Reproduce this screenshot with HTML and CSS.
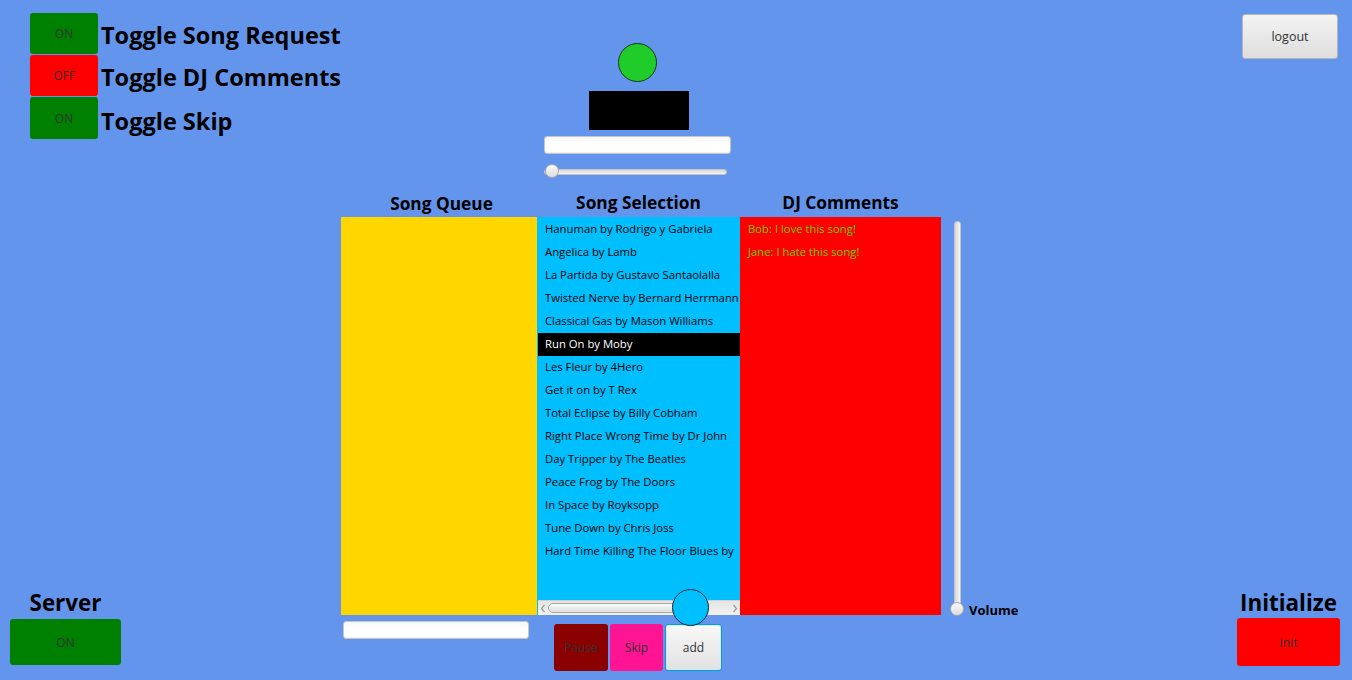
FILE: index.html
```html
<!DOCTYPE html>
<html lang="en">
<head>
<meta charset="utf-8">
<title>DJ Console</title>
<link rel="stylesheet" href="styles.css">
</head>
<body>
<div class="app">
  <aside class="left">
    <div class="toggles">
      <div class="toggle-row"><button class="tbtn on">ON</button><span class="tlabel">Toggle Song Request</span></div>
      <div class="toggle-row"><button class="tbtn off">OFF</button><span class="tlabel">Toggle DJ Comments</span></div>
      <div class="toggle-row"><button class="tbtn on">ON</button><span class="tlabel">Toggle Skip</span></div>
    </div>
    <div class="server">
      <div class="blabel">Server</div>
      <button class="sbtn on">ON</button>
    </div>
  </aside>

  <main class="center">
    <div class="top-controls">
      <div class="led"></div>
      <div class="display"></div>
      <div class="textfield tf-top"></div>
      <div class="hslider">
        <div class="track"></div>
        <div class="thumb hthumb"></div>
      </div>
    </div>

    <div class="lists-area">
      <div class="lists">
        <section class="col">
          <h2 class="colhead head-queue">Song Queue</h2>
          <div class="panel queue"></div>
        </section>
        <section class="col">
          <h2 class="colhead">Song Selection</h2>
          <div class="panel selection">
            <ul class="items">
              <li>Hanuman by Rodrigo y Gabriela</li>
              <li>Angelica by Lamb</li>
              <li>La Partida by Gustavo Santaolalla</li>
              <li>Twisted Nerve by Bernard Herrmann</li>
              <li>Classical Gas by Mason Williams</li>
              <li class="selected">Run On by Moby</li>
              <li>Les Fleur by 4Hero</li>
              <li>Get it on by T Rex</li>
              <li>Total Eclipse by Billy Cobham</li>
              <li>Right Place Wrong Time by Dr John</li>
              <li>Day Tripper by The Beatles</li>
              <li>Peace Frog by The Doors</li>
              <li>In Space by Royksopp</li>
              <li>Tune Down by Chris Joss</li>
              <li>Hard Time Killing The Floor Blues by</li>
            </ul>
            <div class="hscroll">
              <svg class="arrow" width="6" height="9" viewBox="0 0 6 9"><path d="M4.5 1 L1.5 4.5 L4.5 8" fill="none" stroke="#9a9a9a" stroke-width="1.2"/></svg>
              <div class="sb-track"><div class="sb-thumb"></div></div>
              <svg class="arrow" width="6" height="9" viewBox="0 0 6 9"><path d="M1.5 1 L4.5 4.5 L1.5 8" fill="none" stroke="#9a9a9a" stroke-width="1.2"/></svg>
            </div>
          </div>
        </section>
        <section class="col">
          <h2 class="colhead">DJ Comments</h2>
          <div class="panel comments">
            <ul class="items">
              <li>Bob: I love this song!</li>
              <li>Jane: I hate this song!</li>
            </ul>
          </div>
        </section>
      </div>
      <div class="volume">
        <div class="vslider">
          <div class="vtrack"></div>
          <div class="thumb vthumb"></div>
        </div>
        <span class="vlabel">Volume</span>
      </div>
    </div>

    <div class="bottom-row">
      <div class="textfield tf-queue"></div>
      <div class="actions">
        <button class="abtn pause">Pause</button>
        <button class="abtn skip">Skip</button>
        <button class="abtn add">add</button>
      </div>
    </div>
  </main>

  <aside class="right">
    <button class="logout">logout</button>
    <div class="init">
      <div class="blabel">Initialize</div>
      <button class="ibtn">init</button>
    </div>
  </aside>

  <div class="blue-dot"></div>
</div>
</body>
</html>
```

FILE: styles.css
```css
* { box-sizing: border-box; }
html, body { margin: 0; padding: 0; }
body {
  background: #6495ED;
  width: 1352px;
  height: 680px;
  overflow: hidden;
  font-family: "Open Sans", "Noto Sans", sans-serif;
  color: #000;
}
button { font-family: "Open Sans", "Noto Sans", sans-serif; cursor: default; }

.app {
  position: relative;
  display: grid;
  grid-template-columns: 341px 896px 115px;
  height: 680px;
}

/* left column */
.left {
  display: flex;
  flex-direction: column;
  justify-content: space-between;
  padding: 13px 0 15px 0;
  min-width: 0;
}
.toggles { display: flex; flex-direction: column; gap: 1px; padding-left: 30px; }
.toggle-row { display: flex; align-items: center; gap: 3px; white-space: nowrap; }
.tbtn {
  flex: none;
  width: 68px; height: 41px; border: none; border-radius: 3px;
  font-size: 12px; color: #333; padding: 0;
}
.on { background: #008000; }
.off { background: #FF0000; }
.tlabel { font-weight: 700; font-size: 23.5px; white-space: nowrap; padding-top: 3px; }
.toggle-row:last-child .tbtn { height: 42px; }
.toggle-row:last-child .tlabel { padding-top: 5px; }

.blabel { font-weight: 700; font-size: 22.4px; line-height: 28px; white-space: nowrap; }
.server {
  display: flex; flex-direction: column; align-items: center;
  width: 111px; margin-left: 10px; gap: 2px;
}
.sbtn { width: 111px; height: 46px; border: none; border-radius: 3px; font-size: 12px; color: #333; }

/* center */
.center { display: flex; flex-direction: column; }
.top-controls {
  margin-left: 203px; width: 187px; padding-top: 43px;
  display: flex; flex-direction: column;
}
.led {
  width: 39px; height: 39px; border-radius: 50%;
  background: #20CC2A; border: 1px solid #143a14; align-self: center;
}
.display { width: 100px; height: 39px; background: #000; margin-top: 9px; margin-left: 45px; }
.textfield {
  height: 18px; border: 1px solid #c6c6c6; border-radius: 3px;
  background: linear-gradient(#f6f6f6, #ffffff 40%, #ffffff);
  box-shadow: inset 0 -1px 1px rgba(0,0,0,0.06);
}
.tf-top { margin-top: 6px; }
.hslider { position: relative; margin-top: 11px; width: 183px; height: 13px; display: flex; align-items: center; }
.track {
  flex: 1; height: 6px; border-radius: 3px;
  background: linear-gradient(#d9d9d9, #f4f4f4);
  border: 1px solid #c4c4c4;
}
.thumb {
  position: absolute; width: 14px; height: 14px; border-radius: 50%;
  background: linear-gradient(#fbfbfb, #dcdcdc);
  border: 1px solid #a9a9a9;
}
.hthumb { left: 1px; top: -1px; }

.lists-area { display: flex; }
.lists { display: grid; grid-template-columns: 196px 203px 201px; }
.colhead {
  height: 39px; margin: 0; padding-bottom: 3px;
  display: flex; align-items: flex-end; justify-content: center;
  font-size: 17.3px; font-weight: 700; line-height: 22px;
}
.head-queue { padding-left: 5px; padding-bottom: 2px; }
.panel { height: 398px; }
.queue { background: #FFD700; }
.selection { background: #00BFFF; display: flex; flex-direction: column; padding: 1px 0 0 1px; }
.comments { background: #FF0000; padding: 1px 0 0 1px; }
.items { list-style: none; margin: 0; padding: 0; flex: 1; overflow: hidden; }
.items li {
  height: 23px; line-height: 22px; padding: 0 0 1px 7px;
  font-size: 11.3px; white-space: nowrap; overflow: hidden;
}
.selection .items li { color: #000; }
.selection .items li.selected { background: #000; color: #fff; }
.comments .items li { color: #5ccc00; }

.hscroll {
  height: 15px; display: flex; align-items: center; gap: 2px; padding: 0 2px 0 2px;
  background: linear-gradient(#e4e4e4, #f2f2f2);
  border-top: 1px solid #d0d0d0;
}
.arrow { flex: none; }
.sb-track { flex: 1; height: 11px; display: flex; align-items: center; }
.sb-thumb {
  width: 141px; height: 10px; border-radius: 5px;
  background: linear-gradient(#fafafa, #dedede);
  border: 1px solid #a8a8a8;
}

.volume { display: flex; align-items: flex-end; margin-left: 12px; }
.vslider { position: relative; width: 8px; padding-top: 43px; height: 437px; display: flex; justify-content: center; }
.vtrack {
  width: 7px; height: 392px; border-radius: 3px;
  background: linear-gradient(90deg, #d7d7d7, #f6f6f6);
  border: 1px solid #c4c4c4;
}
.vthumb { left: -3px; bottom: -1px; }
.vlabel { font-weight: 700; font-size: 13px; margin-left: 8px; margin-bottom: -4px; line-height: 18px; }

.bottom-row { display: flex; align-items: flex-start; }
.tf-queue { width: 186px; margin-left: 2px; margin-top: 6px; }
.actions { display: flex; gap: 2px; margin-left: 25px; margin-top: 9px; }
.abtn {
  height: 47px; border: none; border-radius: 3px; font-size: 12px; color: #333; padding: 0;
}
.pause { width: 54px; background: #8B0000; }
.skip { width: 53px; background: #FF1493; }
.add {
  width: 57px; background: linear-gradient(#f8f8f8, #e2e2e2);
  border: 1px solid #039ED3; box-shadow: inset 0 0 0 1px #cfeefa;
}

/* right */
.right {
  display: flex; flex-direction: column; justify-content: space-between;
  padding: 14px 0 14px 0;
}
.logout {
  width: 96px; height: 45px; margin-left: 5px;
  border: 1px solid #b6b6b6; border-radius: 3px;
  background: linear-gradient(#f3f3f3, #dedede);
  font-size: 12.5px; color: #333;
}
.init { width: 103px; display: flex; flex-direction: column; align-items: center; gap: 1px; }
.ibtn { width: 103px; height: 48px; border: none; border-radius: 3px; background: #FF0000; font-size: 12.5px; color: #333; }

.blue-dot {
  position: absolute; left: 672px; top: 589px;
  width: 37px; height: 37px; border-radius: 50%;
  background: #00BFFF; border: 1px solid #0f2a3a;
}
```
